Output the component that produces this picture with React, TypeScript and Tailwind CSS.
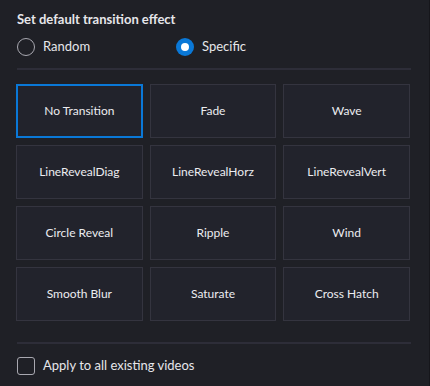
const effects = [
  "No Transition",
  "Fade",
  "Wave",
  "LineRevealDiag",
  "LineRevealHorz",
  "LineRevealVert",
  "Circle Reveal",
  "Ripple",
  "Wind",
  "Smooth Blur",
  "Saturate",
  "Cross Hatch",
];

export default function App() {
  return (
    <div
      className="w-[430px] h-[386px] bg-[#1f2026] border-r border-[#16161b] text-[#e6e6ea] overflow-hidden"
      style={{ fontFamily: 'Lato, "Noto Sans", sans-serif' }}
    >
      <div className="pl-[17px] pr-[18px] pt-[9px]">
        <div className="text-[13px] font-bold leading-[20px]">Set default transition effect</div>

        <div className="flex items-center h-[32px] mt-[2px]">
          <label className="flex items-center gap-[8px] w-[159px]">
            <span className="w-[18px] h-[18px] rounded-full border-[1.5px] border-[#a8a8b0]" />
            <span className="text-[13px]">Random</span>
          </label>
          <label className="flex items-center gap-[8px]">
            <span className="w-[18px] h-[18px] rounded-full bg-[#0a78d7] flex items-center justify-center">
              <span className="w-[8px] h-[8px] rounded-full bg-white" />
            </span>
            <span className="text-[13px]">Specific</span>
          </label>
        </div>

        <div className="h-[2px] bg-[#2d2d38] mt-[5px]" />

        <div className="grid grid-cols-3 gap-x-[7px] gap-y-[7px] w-[394px] -ml-[1px] mt-[14px]">
          {effects.map((name, i) => (
            <button
              key={name}
              className={
                i === 0
                  ? "h-[54px] bg-[#22232c] border-2 border-[#0a78d7] text-[12px] text-[#ececf0]"
                  : "h-[54px] bg-[#22232c] border border-[#34343f] text-[12px] text-[#ececf0]"
              }
            >
              {name}
            </button>
          ))}
        </div>

        <div className="h-[2px] bg-[#2d2d38] mt-[21px]" />

        <label className="flex items-center gap-[8px] mt-[12px]">
          <span className="w-[18px] h-[18px] rounded-[3px] border-[1.5px] border-[#a8a8b0]" />
          <span className="text-[13px]">Apply to all existing videos</span>
        </label>
      </div>
    </div>
  );
}
